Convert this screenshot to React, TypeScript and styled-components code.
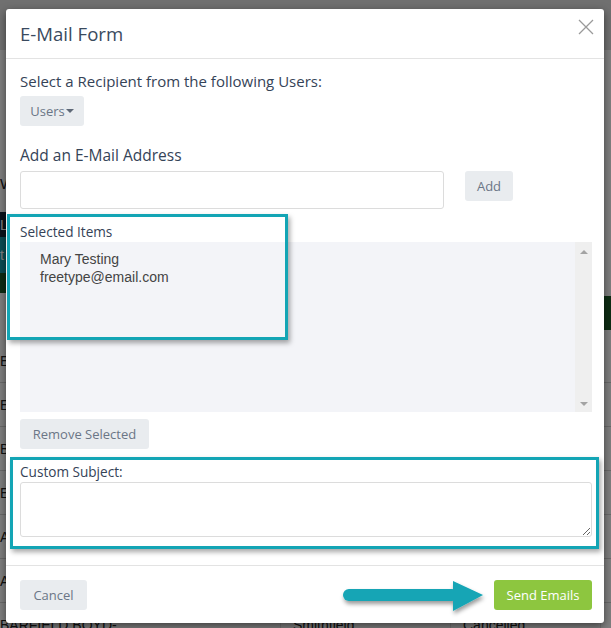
import React from 'react';
import styled, { createGlobalStyle } from 'styled-components';

const GlobalStyle = createGlobalStyle`
  html, body {
    margin: 0;
    padding: 0;
  }
  body {
    font-family: "Open Sans", sans-serif;
    background: #fff;
    overflow: hidden;
  }
`;

const TEAL = '#13a5b5';

/* ---------- page behind the dialog ---------- */

const Page = styled.div`
  position: relative;
  width: 611px;
  height: 628px;
  overflow: hidden;
  background: #fff;
  font-family: "Liberation Sans", Arial, sans-serif;
  color: #222;
`;

const TopBar = styled.div`
  height: 50px;
  background: #e0e0e0;
`;

const Intro = styled.div`
  height: 162px;
  display: flex;
  align-items: flex-end;
  padding-bottom: 20px;
  box-sizing: border-box;
  font-size: 15px;
`;

const Band = styled.div<{ $bg: string; $h: number }>`
  width: 300px;
  height: ${p => p.$h}px;
  background: ${p => p.$bg};
  color: #fff;
  font-size: 14px;
  display: flex;
  align-items: center;
`;

const ToolRow = styled.div`
  height: 66px;
  display: flex;
  justify-content: space-between;
`;

const GreenChip = styled.div<{ $h: number; $top: number }>`
  width: 90px;
  height: ${p => p.$h}px;
  margin-top: ${p => p.$top}px;
  background: #1d5a28;
  color: #9ad0ff;
  font-size: 14px;
  display: flex;
  align-items: center;
  padding-left: 4px;
`;

const Row = styled.div`
  height: 44px;
  box-sizing: border-box;
  border-bottom: 1px solid #d4d4d4;
  display: grid;
  grid-template-columns: 280px 170px 150px 1fr;
  font-size: 14px;
`;

const Cell = styled.div<{ $tone?: string }>`
  display: flex;
  align-items: center;
  padding-left: 12px;
  white-space: nowrap;
  overflow: hidden;
  color: ${p => p.$tone || '#222'};
  border-left: 1px solid #e4e4e4;

  &:first-child {
    padding-left: 0;
    border-left: none;
  }
`;

/* ---------- dialog ---------- */

const Overlay = styled.div`
  position: absolute;
  inset: 0;
  background: rgba(0, 0, 0, 0.5);
  padding: 9px 0 0 6px;
`;

const Modal = styled.div`
  position: relative;
  width: 598px;
  height: 614px;
  background: #fff;
  border-radius: 3px;
  box-shadow: 0 3px 9px rgba(0, 0, 0, 0.5);
  display: flex;
  flex-direction: column;
  font-family: "Open Sans", sans-serif;
  color: #354357;
`;

const Header = styled.div`
  height: 49px;
  border-bottom: 1px solid #e3e3e3;
  display: flex;
  justify-content: space-between;
  padding: 0 10px 0 14px;
`;

const Title = styled.h4`
  margin: 0;
  font-size: 18.6px;
  font-weight: 400;
  line-height: 49px;
  color: #3a4a5e;
`;

const CloseButton = styled.button`
  margin-top: 10px;
  width: 16px;
  height: 16px;
  padding: 0;
  border: none;
  background: none;
  cursor: pointer;
`;

const Body = styled.div`
  padding: 12px 12px 28px 14px;
  flex: 0 0 auto;
`;

const Label = styled.div<{ $size: number; $weight: number; $top: number; $lh: number }>`
  font-size: ${p => p.$size}px;
  font-weight: ${p => p.$weight};
  line-height: ${p => p.$lh}px;
  margin-top: ${p => p.$top}px;
  color: #354357;
  white-space: nowrap;
`;

const GreyButton = styled.button<{ $w: number; $top?: number }>`
  display: flex;
  align-items: center;
  justify-content: center;
  width: ${p => p.$w}px;
  height: 30px;
  margin-top: ${p => p.$top || 0}px;
  padding: 0;
  border: none;
  border-radius: 3px;
  background: #e9ecef;
  color: #6b7686;
  font-family: "Open Sans", sans-serif;
  font-size: 13px;
  cursor: pointer;
`;

const Caret = styled.span`
  width: 0;
  height: 0;
  margin-left: 1px;
  border-left: 4px solid transparent;
  border-right: 4px solid transparent;
  border-top: 4px solid #5e6877;
`;

const AddRow = styled.div`
  display: flex;
  align-items: flex-start;
  gap: 21px;
  margin-top: 6px;
`;

const TextInput = styled.input`
  width: 424px;
  height: 38px;
  box-sizing: border-box;
  border: 1px solid #dcdcdc;
  border-radius: 3px;
  padding: 0 10px;
  font-size: 14px;
`;

const ListBox = styled.div`
  margin-top: 1px;
  height: 170px;
  display: flex;
  background: #f3f4f8;
`;

const ListItems = styled.div`
  flex: 1;
  padding: 8px 0 0 20px;
  font-family: "Liberation Sans", Arial, sans-serif;
  font-size: 14px;
  line-height: 18px;
  color: #444;
`;

const ScrollTrack = styled.div`
  width: 17px;
  background: #efefef;
  display: flex;
  flex-direction: column;
  justify-content: space-between;
  align-items: center;
  padding: 8px 0 6px;
  box-sizing: border-box;
`;

const Arrow = styled.span<{ $up?: boolean }>`
  width: 0;
  height: 0;
  border-left: 4px solid transparent;
  border-right: 4px solid transparent;
  ${p => (p.$up ? 'border-bottom: 4px solid #a3a3a3;' : 'border-top: 4px solid #a3a3a3;')}
`;

const TextArea = styled.textarea`
  display: block;
  margin-top: 1px;
  width: 572px;
  height: 55px;
  box-sizing: border-box;
  border: 1px solid #dcdcdc;
  border-radius: 3px;
  font-size: 14px;
  resize: vertical;
`;

const Footer = styled.div`
  flex: 1;
  border-top: 1px solid #e3e3e3;
  display: flex;
  justify-content: space-between;
  align-items: flex-start;
  padding: 14px 12px 0 14px;
`;

const SendButton = styled.button`
  width: 98px;
  height: 30px;
  border: none;
  border-radius: 3px;
  background: #8dc63f;
  color: #fff;
  font-family: "Open Sans", sans-serif;
  font-size: 13px;
  font-weight: 500;
  cursor: pointer;
`;

/* ---------- annotations drawn over the dialog ---------- */

const Highlight = styled.div<{ $l: number; $t: number; $w: number; $h: number }>`
  position: absolute;
  left: ${p => p.$l}px;
  top: ${p => p.$t}px;
  width: ${p => p.$w}px;
  height: ${p => p.$h}px;
  box-sizing: border-box;
  border: 3px solid ${TEAL};
  box-shadow: 2px 3px 5px rgba(0, 0, 0, 0.35);
  pointer-events: none;
`;

const PointerArrow = styled.svg`
  position: absolute;
  left: 329px;
  top: 566px;
  overflow: visible;
  pointer-events: none;
`;

const rows = [
  ['EADS, JOHN', 'Raleigh', 'Confirmed', 'Confirmed'],
  ['EVANS, KAY', 'Garner', 'Confirmed', ''],
  ['BAKER, LEE', 'Cary', 'Pending', ''],
  ['ELLIS, MAX', 'Apex', 'Pending', ''],
  ['ADAMS, NED', 'Clayton', 'Confirmed', 'rescheduled'],
  ['ALLEN, PAM', 'Dunn', 'Pending', ''],
  ['BARFIELD BOYD-', 'Smithfield', 'Cancelled', 'Confirmed'],
];

const App: React.FC = () => {
  return (
    <>
      <GlobalStyle />
      <Page>
        <TopBar />
        <Intro>Welcome to the scheduler</Intro>
        <Band $bg="#15263a" $h={25}>Logged appointments</Band>
        <Band $bg="#1799a9" $h={36}>t Filters</Band>
        <ToolRow>
          <GreenChip $h={20} $top={0} />
          <GreenChip $h={34} $top={23}>Add</GreenChip>
        </ToolRow>
        {rows.map((r, i) => (
          <Row key={i}>
            <Cell>{r[0]}</Cell>
            <Cell>{r[1]}</Cell>
            <Cell>{r[2]}</Cell>
            <Cell $tone={i === 0 ? '#a0522d' : '#222'}>{r[3]}</Cell>
          </Row>
        ))}

        <Overlay>
          <Modal>
            <Header>
              <Title>E-Mail Form</Title>
              <CloseButton aria-label="Close">
                <svg width="16" height="16" viewBox="0 0 16 16">
                  <path d="M1 1 L15 15 M15 1 L1 15" stroke="#9a9a9a" strokeWidth="1.3" fill="none" />
                </svg>
              </CloseButton>
            </Header>

            <Body>
              <Label $size={15} $weight={500} $top={0} $lh={20}>
                Select a Recipient from the following Users:
              </Label>
              <GreyButton $w={64} $top={5}>
                Users<Caret />
              </GreyButton>

              <Label $size={15.5} $weight={500} $top={19} $lh={20}>
                Add an E-Mail Address
              </Label>
              <AddRow>
                <TextInput type="text" />
                <GreyButton $w={48}>Add</GreyButton>
              </AddRow>

              <Label $size={13.6} $weight={400} $top={14} $lh={18}>
                Selected Items
              </Label>
              <ListBox>
                <ListItems>
                  <div>Mary Testing</div>
                  <div>freetype@email.com</div>
                </ListItems>
                <ScrollTrack>
                  <Arrow $up />
                  <Arrow />
                </ScrollTrack>
              </ListBox>
              <GreyButton $w={129} $top={7}>Remove Selected</GreyButton>

              <Label $size={13.6} $weight={400} $top={14} $lh={18}>
                Custom Subject:
              </Label>
              <TextArea />
            </Body>

            <Footer>
              <GreyButton $w={67}>Cancel</GreyButton>
              <SendButton>Send Emails</SendButton>
            </Footer>

            <Highlight $l={1} $t={205} $w={281} $h={126} />
            <Highlight $l={4} $t={448} $w={589} $h={92} />

            <PointerArrow width="155" height="45" viewBox="0 0 155 45">
              <defs>
                <filter id="arrowShadow" x="-20%" y="-40%" width="140%" height="200%">
                  <feDropShadow dx="1" dy="3" stdDeviation="2" floodColor="#000" floodOpacity="0.4" />
                </filter>
              </defs>
              <g filter="url(#arrowShadow)" fill={TEAL}>
                <rect x="8" y="14" width="115" height="12" rx="6" />
                <polygon points="118,6 148,20 118,36" />
              </g>
            </PointerArrow>
          </Modal>
        </Overlay>
      </Page>
    </>
  );
};

export default App;
